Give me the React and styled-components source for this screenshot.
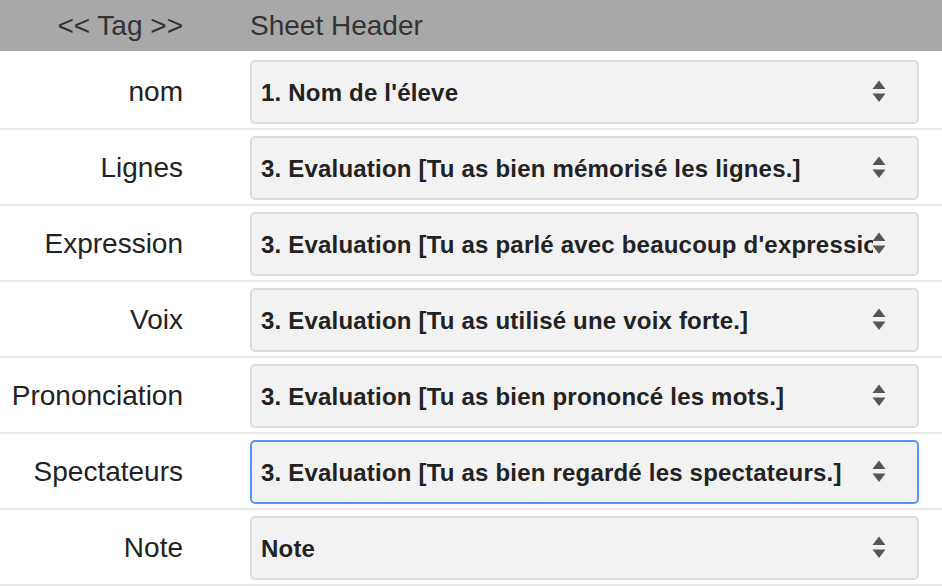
import styled, { createGlobalStyle } from "styled-components";

const GlobalStyle = createGlobalStyle`
    html, body{
        margin: 0;
        padding: 0;
        background: #fff;
        font-family: "Liberation Sans", Arial, Helvetica, sans-serif;
    }
`

const fields = [
    { tag: "nom", value: "1. Nom de l'éleve" },
    { tag: "Lignes", value: "3. Evaluation [Tu as bien mémorisé les lignes.]" },
    { tag: "Expression", value: "3. Evaluation [Tu as parlé avec beaucoup d'expression.]" },
    { tag: "Voix", value: "3. Evaluation [Tu as utilisé une voix forte.]" },
    { tag: "Prononciation", value: "3. Evaluation [Tu as bien prononcé les mots.]" },
    { tag: "Spectateurs", value: "3. Evaluation [Tu as bien regardé les spectateurs.]", focused: true },
    { tag: "Note", value: "Note" },
]

function Arrows(){
    return(
        <ArrowIcon width="14" height="23" viewBox="0 0 14 23">
            <path d="M7 0.5 L13.5 9 L0.5 9 Z" fill="#555" />
            <path d="M0.5 13.5 L13.5 13.5 L7 22 Z" fill="#555" />
        </ArrowIcon>
    )
}

export default function App(){
    return(
        <>
        <GlobalStyle />
        <Page>
            <Header>
                <TagCell>{"<< Tag >>"}</TagCell>
                <span>Sheet Header</span>
            </Header>
            <Rows>
                {fields.map((f,i)=>
                    <Row key={i}>
                        <Label>{f.tag}</Label>
                        <SelectWrap>
                            <Select focused={f.focused ? 1 : 0} defaultValue={f.value}>
                                <option value={f.value}>{f.value}</option>
                            </Select>
                            <Arrows />
                        </SelectWrap>
                    </Row>
                )}
            </Rows>
        </Page>
        </>
    )
}

const Page = styled.div`
    width: 942px;
    display: flex;
    flex-direction: column;
`

const Header = styled.div`
    height: 51px;
    background-color: #a8a8a8;
    display: grid;
    grid-template-columns: 183px 1fr;
    column-gap: 67px;
    align-items: center;
    font-size: 28px;
    color: #333;
`

const TagCell = styled.span`
    text-align: right;
`

const Rows = styled.div`
    display: flex;
    flex-direction: column;
    padding-top: 3px;
`

const Row = styled.div`
    display: grid;
    grid-template-columns: 183px 1fr;
    column-gap: 67px;
    align-items: center;
    padding: 6px 23px 4px 0px;
    border-bottom: 2px solid #e8e8e8;
`

const Label = styled.div`
    text-align: right;
    font-size: 28px;
    color: #222;
    white-space: nowrap;
`

const SelectWrap = styled.div`
    position: relative;
    height: 64px;
`

const Select = styled.select`
    appearance: none;
    -webkit-appearance: none;
    box-sizing: border-box;
    width: 100%;
    height: 64px;
    margin: 0;
    padding: 0px 44px 0px 9px;
    background-color: #f2f2f2;
    border: 2px solid ${props=> props.focused ? "#5296f7" : "#dcdcdc"};
    border-radius: 5px;
    font-family: "Liberation Sans", Arial, Helvetica, sans-serif;
    font-size: 24px;
    font-weight: 700;
    letter-spacing: 0.2px;
    color: #222;
    outline: none;
`

const ArrowIcon = styled.svg`
    position: absolute;
    right: 33px;
    top: 20px;
    pointer-events: none;
`
